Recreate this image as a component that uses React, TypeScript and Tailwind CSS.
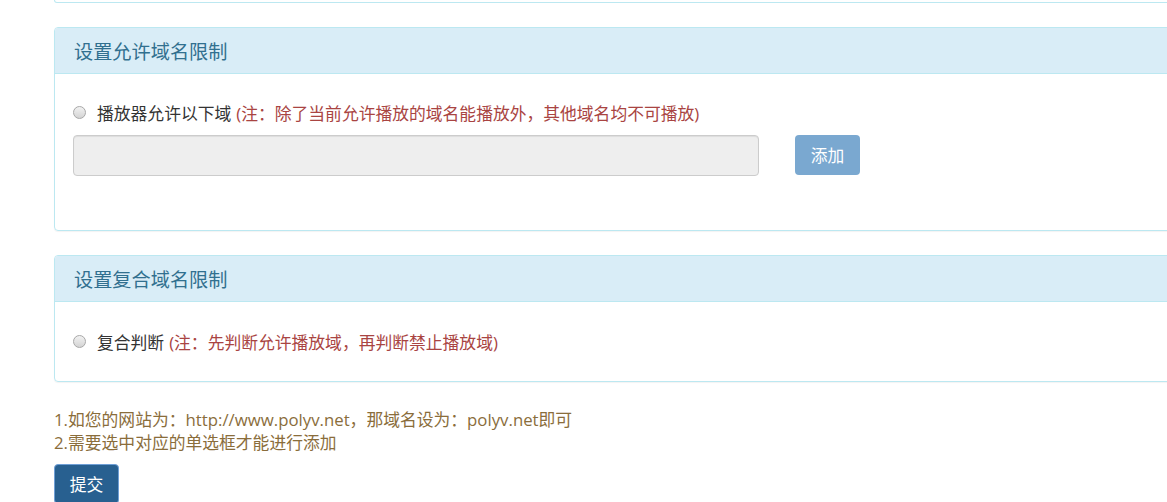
import React from "react";

const font = { fontFamily: '"Open Sans", "Noto Sans CJK SC", sans-serif' };

function Radio() {
  return (
    <span className="inline-block w-[13px] h-[13px] rounded-full border border-[#a8a8a8] bg-gradient-to-b from-[#f2f2f2] to-[#d4d4d4] shrink-0" />
  );
}

export default function App() {
  return (
    <div className="w-full h-[502px] overflow-hidden bg-white text-[16.8px] text-[#333]" style={font}>
      <div className="ml-[54px] w-[1160px]">
        <div className="h-[3px] border-x border-b border-[#bce8f1] rounded-b-[4px]" />

        <div className="mt-[24px] border border-[#bce8f1] rounded-[4px] shadow-[0_1px_1px_rgba(0,0,0,0.05)]">
          <div className="h-[46px] pt-[3px] bg-[#d9edf7] border-b border-[#bce8f1] rounded-t-[3px] pl-[19px] flex items-center text-[19.2px] text-[#31708f]">
            设置允许域名限制
          </div>
          <div className="pl-[18px] pt-[27px] pb-[54px]">
            <div className="h-[23px] leading-[23px] flex items-center">
              <Radio />
              <span className="ml-[11px] pt-[2px]">播放器允许以下域</span>
              <span className="ml-[5px] pt-[2px] text-[#a94442]">(注：除了当前允许播放的域名能播放外，其他域名均不可播放)</span>
            </div>
            <div className="mt-[11px] flex items-start">
              <div className="w-[686px] h-[41px] bg-[#eee] border border-[#ccc] rounded-[4px] shadow-[inset_0_1px_1px_rgba(0,0,0,0.075)]" />
              <div className="ml-[36px] w-[65px] h-[40px] pt-[2px] rounded-[4px] bg-[#7aa8d0] text-white flex items-center justify-center">
                添加
              </div>
            </div>
          </div>
        </div>

        <div className="mt-[24px] border border-[#bce8f1] rounded-[4px] shadow-[0_1px_1px_rgba(0,0,0,0.05)]">
          <div className="h-[46px] pt-[3px] bg-[#d9edf7] border-b border-[#bce8f1] rounded-t-[3px] pl-[19px] flex items-center text-[19.2px] text-[#31708f]">
            设置复合域名限制
          </div>
          <div className="pl-[18px] pt-[28px] pb-[28px]">
            <div className="h-[23px] leading-[23px] flex items-center">
              <Radio />
              <span className="ml-[11px] pt-[2px]">复合判断</span>
              <span className="ml-[5px] pt-[2px] text-[#a94442]">(注：先判断允许播放域，再判断禁止播放域)</span>
            </div>
          </div>
        </div>

        <div className="mt-[26px] text-[#8a6d3b] leading-[23px]">
          <div>1.如您的网站为：http://www.polyv.net，那域名设为：polyv.net即可</div>
          <div>2.需要选中对应的单选框才能进行添加</div>
        </div>

        <div className="mt-[10px] w-[65px] h-[40px] pt-[2px] rounded-[4px] bg-[#286090] border border-[#6f9fd6] text-white flex items-center justify-center">
          提交
        </div>
      </div>
    </div>
  );
}
